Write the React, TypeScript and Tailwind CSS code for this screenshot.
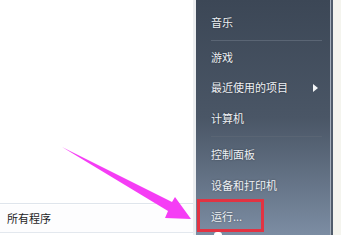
import React from "react";

const font = { fontFamily: '"Noto Sans CJK SC", "Noto Sans", sans-serif' };

function Item({ label, h, arrow }: { label: string; h: string; arrow?: boolean }) {
  return (
    <div className={`${h} flex items-center justify-between pl-[15px] pr-[12px]`}>
      <span className="text-[11px] leading-none text-[#eef1f5] [text-shadow:0_0_2px_rgba(0,0,0,0.45)]">{label}</span>
      {arrow && (
        <svg width="5" height="8" viewBox="0 0 5 8">
          <path d="M0 0 L5 4 L0 8 Z" fill="#f4f6f8" />
        </svg>
      )}
    </div>
  );
}

function Sep({ h }: { h: string }) {
  return (
    <div className={`${h} flex items-center pl-[15px] pr-[8px]`}>
      <div className="h-px w-full bg-[#5a6574]" />
    </div>
  );
}

export default function App() {
  return (
    <div className="relative w-[341px] h-[235px] overflow-hidden bg-white flex" style={font}>
      <div className="w-[193px] h-full flex flex-col justify-end bg-white">
        <div className="h-px bg-[#dfe5ec] mb-px" />
        <div className="h-[27px] flex items-center pl-[7px] bg-[#fdfdfe]">
          <span className="text-[11px] leading-none text-[#1e1e1e]">所有程序</span>
        </div>
        <div className="h-px bg-[#e3e8ee]" />
        <div className="h-[2px] bg-white" />
      </div>
      <div className="w-[3px] h-full bg-[#eceef0]" />
      <div className="w-[134px] h-full bg-gradient-to-b from-[#3c4756] via-[#4a5666] to-[#7c8da3] flex flex-col pt-[7px]">
        <Item label="音乐" h="h-[30px]" />
        <Sep h="h-[6px]" />
        <Item label="游戏" h="h-[29px]" />
        <Item label="最近使用的项目" h="h-[31px]" arrow />
        <Item label="计算机" h="h-[30px]" />
        <Sep h="h-[6px]" />
        <Item label="控制面板" h="h-[31px]" />
        <Item label="设备和打印机" h="h-[30px]" />
        <Item label="运行..." h="h-[32px]" />
      </div>
      <div className="w-px h-full bg-[#a3adb9]" />
      <div className="w-[2px] h-full bg-[#505c6b]" />
      <div className="flex-1 h-full bg-[#f4f4ee]" />

      <div className="absolute left-[197px] top-[199px] w-[67px] h-[33px] border-[3px] border-[#e23342]" />
      <div className="absolute left-[214px] top-[232px] w-[8px] h-[6px] rounded-full bg-white" />

      <svg className="absolute left-0 top-0" width="341" height="235" viewBox="0 0 341 235">
        <polygon points="62,147 172,202 175,197 191,219 165,218 168,211" fill="#f53df5" />
      </svg>
    </div>
  );
}
